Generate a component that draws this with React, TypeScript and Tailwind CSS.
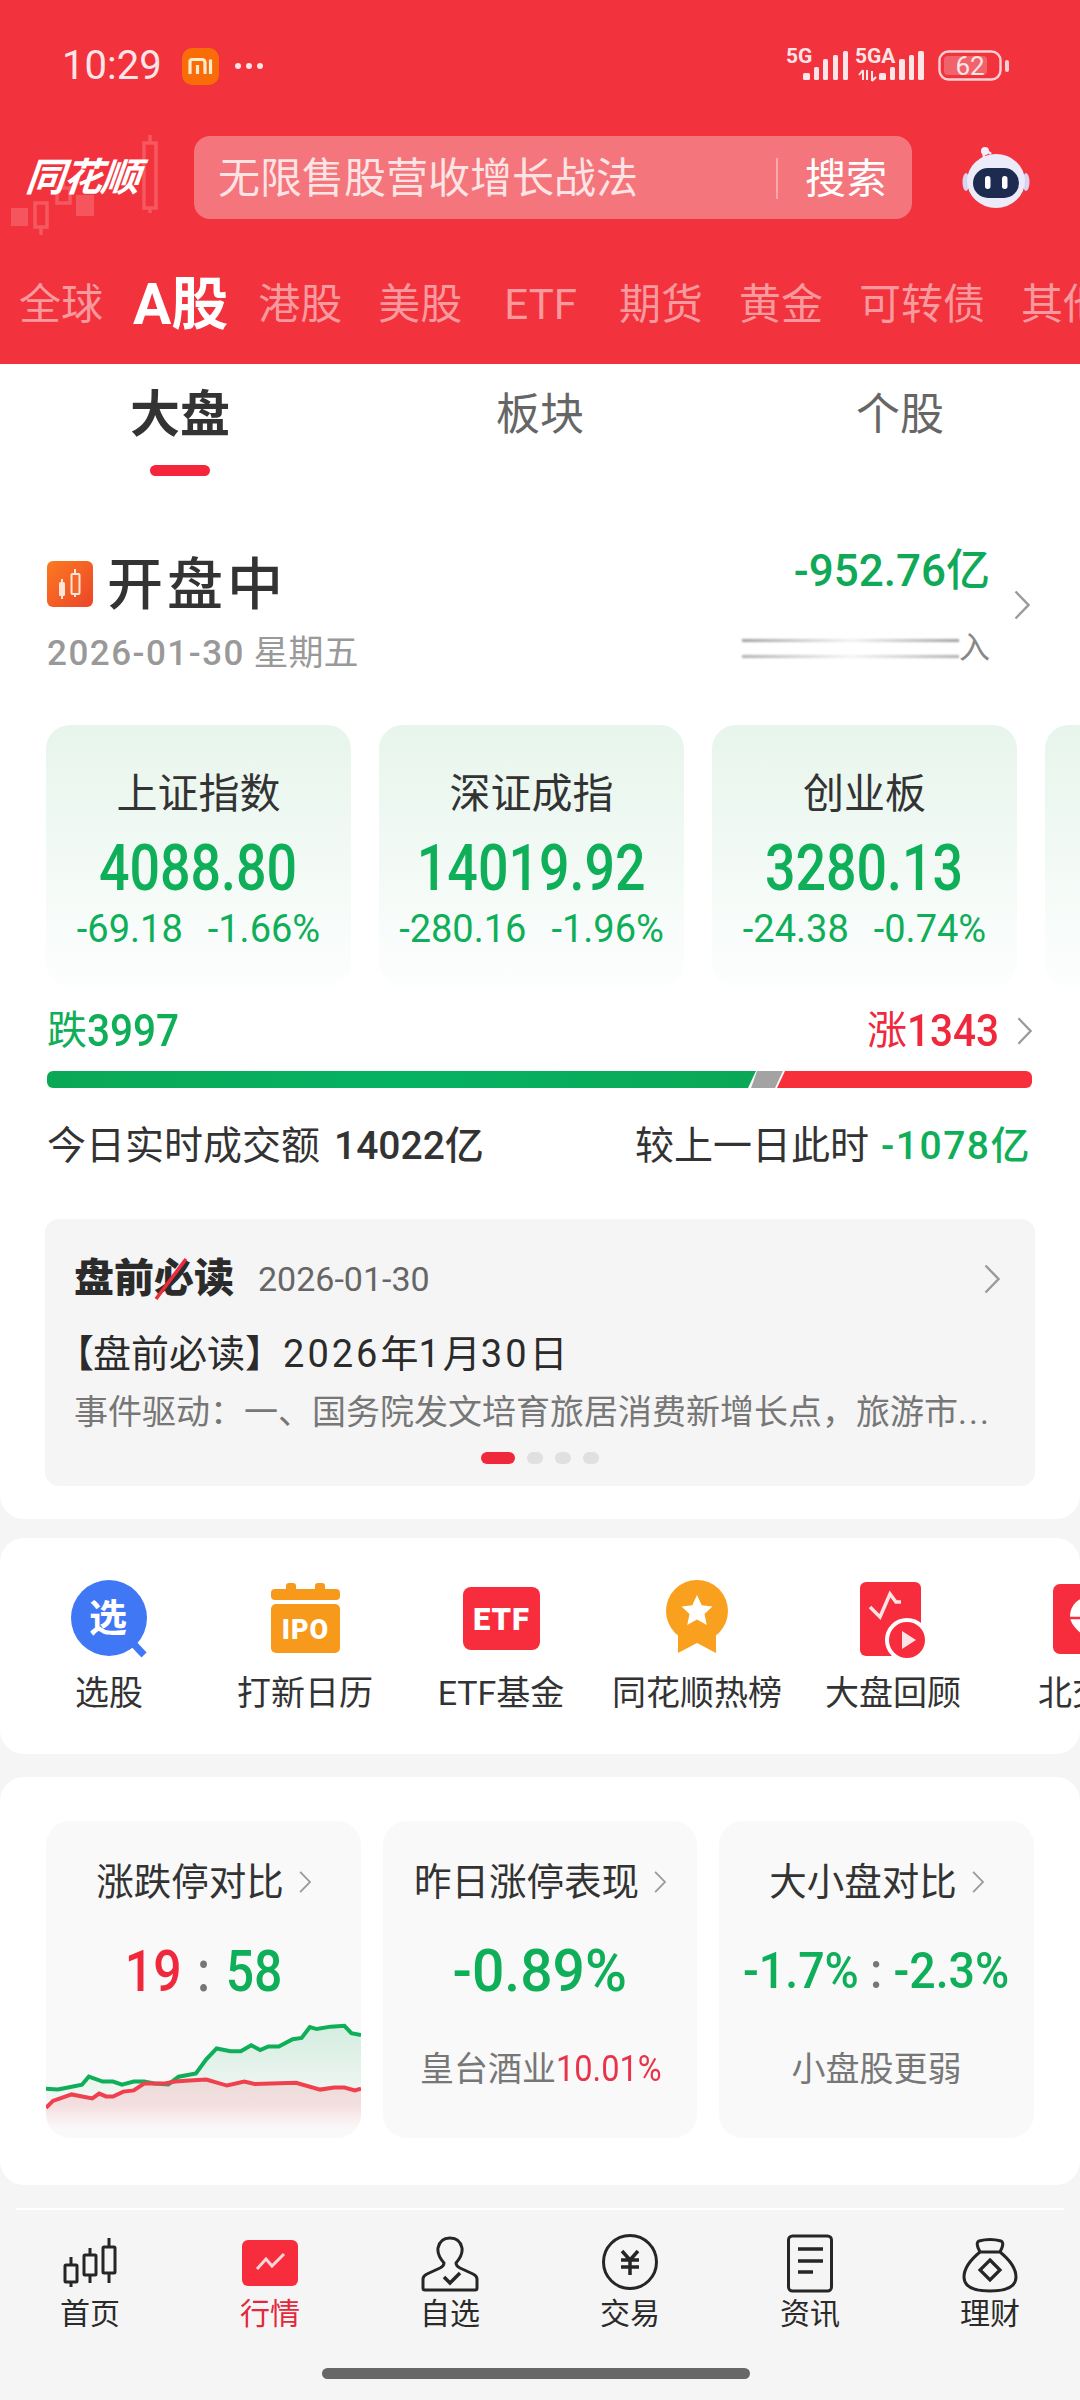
import React from "react";

function Chevron({ className = "w-[16px] h-[30px]" }: { className?: string }) {
  return (
    <svg viewBox="0 0 16 30" className={className} fill="none">
      <path d="M1.5 1.5 L14.5 15 L1.5 28.5" stroke="#9a9a9a" strokeWidth="2.4" />
    </svg>
  );
}

function StatusIcons() {
  const bars = [
    [23, 29, 7],
    [34, 23, 5],
    [43, 15, 5],
    [53, 11, 5],
    [63, 7, 5],
  ];
  const bars2 = [
    [99, 29, 7],
    [110, 23, 5],
    [119, 15, 6],
    [129, 11, 5],
    [138, 7, 6],
  ];
  return (
    <svg width="240" height="44" viewBox="0 0 240 44" className="shrink-0">
      <text x="6" y="19" fontSize="21" fontWeight="700" fill="#fde4e6" fontFamily="Roboto">5G</text>
      {bars.map(([x, y, w]) => (
        <rect key={x} x={x} y={y} width={w} height={36 - y} rx="1.5" fill="#fde4e6" />
      ))}
      <text x="75" y="19" fontSize="21" fontWeight="700" fill="#fde4e6" fontFamily="Roboto">5GA</text>
      <path d="M83 26v10M79 31l4-5M87 26v10 M92 27v10M92 37l4-4" stroke="#fde4e6" strokeWidth="2" fill="none" />
      {bars2.map(([x, y, w]) => (
        <rect key={x} x={x} y={y} width={w} height={36 - y} rx="1.5" fill="#fde4e6" />
      ))}
      <rect x="159.5" y="7.5" width="61" height="28" rx="9" fill="none" stroke="#fbd0d3" strokeWidth="2.4" />
      <rect x="164" y="12" width="43" height="19" rx="4" fill="#f1636b" />
      <text x="190" y="31" textAnchor="middle" fontSize="26" fill="#fde4e6" fontFamily="Roboto">62</text>
      <rect x="225" y="16" width="4" height="12" rx="2" fill="#fbd0d3" />
    </svg>
  );
}

function MiIcon() {
  return (
    <svg width="37" height="37" viewBox="0 0 37 37" className="shrink-0">
      <rect width="37" height="37" rx="10" fill="#f96c08" />
      <path d="M8 26V13.5a2 2 0 0 1 2-2h10a3 3 0 0 1 3 3V26M15.5 17v9" stroke="#fdeccb" strokeWidth="3.2" fill="none" />
      <path d="M28.5 11.5V26" stroke="#fdeccb" strokeWidth="3.2" />
    </svg>
  );
}

function LogoCandles() {
  return (
    <svg width="170" height="110" viewBox="0 0 170 110" className="absolute left-0 top-[-1px]" fill="none">
      <g stroke="#f5585f" strokeWidth="3.5">
        <path d="M150 0v8M150 73v5M41 92v8M63 45v8" />
        <rect x="144" y="8" width="12" height="65" />
        <rect x="35" y="68" width="12" height="24" />
        <rect x="57" y="53" width="13" height="15" />
      </g>
      <rect x="11" y="73" width="17" height="18" fill="#f5565e" />
      <rect x="76" y="60" width="18" height="21" fill="#f5565e" />
    </svg>
  );
}

function Robot() {
  return (
    <svg width="72" height="70" viewBox="0 0 72 70">
      <path d="M24 14 C22 7 27 7 31 11" stroke="#e8e4f6" strokeWidth="2.5" fill="none" />
      <circle cx="25" cy="8" r="4" fill="#f2eefa" />
      <ellipse cx="6" cy="39" rx="3.5" ry="9" fill="#d9d4f2" />
      <ellipse cx="66" cy="39" rx="3.5" ry="9" fill="#d9d4f2" />
      <ellipse cx="36" cy="38" rx="29" ry="27" fill="#ecebfa" />
      <rect x="13" y="25" width="46" height="30" rx="15" fill="#1d2b50" />
      <rect x="25" y="33" width="5.5" height="13" rx="2.7" fill="#fff" />
      <rect x="42" y="33" width="5.5" height="13" rx="2.7" fill="#fff" />
    </svg>
  );
}

function MarketCard({ name, value, d1, d2 }: { name: string; value: string; d1: string; d2: string }) {
  return (
    <div className="w-[305px] h-[262px] shrink-0 rounded-[24px] bg-gradient-to-b from-[#e7f5ec] to-[#fdfefe] flex flex-col items-center pt-[44px]">
      <div className="h-[50px] text-[41px] leading-[50px] text-[#333333]">{name}</div>
      <div className="h-[70px] mt-[15px] text-[64px] leading-[70px] font-medium scale-x-[0.84] text-[#0fae58] whitespace-nowrap">{value}</div>
      <div className="h-[40px] mt-[5px] flex gap-[25px] text-[38px] leading-[40px] text-[#0fae58]">
        <span>{d1}</span>
        <span>{d2}</span>
      </div>
    </div>
  );
}

function Shortcut({ label, children }: { label: string; children: React.ReactNode }) {
  return (
    <div className="w-[196px] shrink-0 flex flex-col items-center">
      <svg width="90" height="80" viewBox="0 0 90 80" fontFamily="Roboto, 'Noto Sans CJK SC', sans-serif">
        {children}
      </svg>
      <div className="mt-[11px] text-[34px] leading-[44px] whitespace-nowrap text-[#333333]">{label}</div>
    </div>
  );
}

function NavItem({ label, active, children }: { label: string; active?: boolean; children: React.ReactNode }) {
  return (
    <div className="flex flex-col items-center">
      <svg width="60" height="60" viewBox="0 0 60 60" fill="none" stroke="#262626" strokeWidth="3">
        {children}
      </svg>
      <div className={`mt-[3px] text-[30px] leading-[36px] ${active ? "text-[#e4283c]" : "text-[#2a2a2a]"}`}>{label}</div>
    </div>
  );
}

const greenPts = "68,808 85,810 100,805 120,798 130,778 150,790 165,790 178,798 195,790 210,790 225,795 245,797 260,778 285,770 300,735 315,708 335,715 350,715 365,700 378,712 390,703 405,703 425,685 438,682 450,655 460,660 480,654 500,652 510,670 524,675";
const redPts = "68,855 78,838 105,822 135,832 145,820 155,827 165,827 180,815 195,812 210,795 240,795 255,790 270,788 300,785 330,800 355,790 370,796 430,793 465,810 485,805 500,805 515,812 524,808";

export default function App() {
  return (
    <div className="w-[1080px] h-[2400px] overflow-hidden bg-[#f5f5f5] flex flex-col font-['Roboto','Noto_Sans_CJK_SC',sans-serif]">
      {/* Red header */}
      <header className="h-[364px] shrink-0 bg-[#f2323c] flex flex-col overflow-hidden">
        <div className="mt-[44px] h-[44px] flex items-center pl-[62px] pr-[60px]">
          <span className="text-[40px] leading-[44px] text-[#fde4e6]">10:29</span>
          <span className="ml-[20px]"><MiIcon /></span>
          <span className="ml-[16px] flex gap-[5px]">
            <i className="w-[6px] h-[6px] rounded-full bg-[#fde4e6]" />
            <i className="w-[6px] h-[6px] rounded-full bg-[#fde4e6]" />
            <i className="w-[6px] h-[6px] rounded-full bg-[#fde4e6]" />
          </span>
          <span className="ml-auto"><StatusIcons /></span>
        </div>
        <div className="mt-[48px] h-[83px] flex items-center">
          <div className="relative w-[194px] h-[83px] shrink-0">
            <LogoCandles />
            <span className="absolute left-[26px] top-[18px] text-[39px] leading-[48px] font-bold italic -skew-x-6 text-white tracking-[-1.5px] whitespace-nowrap">同花顺</span>
          </div>
          <div className="w-[718px] h-[83px] shrink-0 rounded-[16px] bg-[#f5757c] flex items-center pl-[24px] pt-[2px]">
            <span className="text-[42px] leading-[50px] text-[#fce4e5]">无限售股营收增长战法</span>
            <span className="ml-auto w-[2px] h-[41px] bg-[#f9a8ac]" />
            <span className="ml-[27px] mr-[25px] text-[41px] leading-[50px] text-white">搜索</span>
          </div>
          <div className="ml-[48px]"><Robot /></div>
        </div>
        <div className="mt-[62px] h-[48px] flex items-center pl-[19px] gap-[36px] whitespace-nowrap text-[42px] leading-[48px] text-[#f8999e]">
          <span>全球</span>
          <span className="-mx-[6px] text-[57px] font-bold text-white">A股</span>
          <span>港股</span>
          <span>美股</span>
          <span className="mx-[6px]">ETF</span>
          <span>期货</span>
          <span>黄金</span>
          <span>可转债</span>
          <span>其他</span>
        </div>
      </header>

      {/* Market overview */}
      <section className="h-[1155px] shrink-0 bg-white rounded-b-[24px] flex flex-col">
        <div className="grid grid-cols-3 h-[112px] pt-[21px]">
          <div className="flex flex-col items-center">
            <div className="text-[50px] leading-[60px] font-bold text-[#333333]">大盘</div>
            <div className="mt-[20px] w-[60px] h-[11px] rounded-full bg-[#f5263b]" />
          </div>
          <div className="text-center text-[44px] leading-[60px] text-[#666666]">板块</div>
          <div className="text-center text-[44px] leading-[60px] text-[#666666]">个股</div>
        </div>

        <div className="mt-[80px] h-[119px] pl-[47px] pr-[50px] flex">
          <div>
            <div className="flex items-center h-[56px]">
              <svg width="46" height="46" viewBox="0 0 46 46" className="shrink-0">
                <defs>
                  <linearGradient id="open-g" x1="0" y1="0" x2="1" y2="1">
                    <stop offset="0" stopColor="#fb7a22" />
                    <stop offset="1" stopColor="#ec4528" />
                  </linearGradient>
                </defs>
                <rect width="46" height="46" rx="6" fill="url(#open-g)" />
                <rect x="12" y="21" width="6" height="14" rx="1.5" fill="#fde6d8" />
                <path d="M15 18v20M28 8v28" stroke="#fde6d8" strokeWidth="2" />
                <rect x="24.5" y="13" width="8" height="20" rx="1" fill="#f4682a" stroke="#fde6d8" strokeWidth="2" />
              </svg>
              <div className="ml-[14px] pt-[2px] text-[56px] leading-[56px] font-medium tracking-[4px] text-[#333333]">开盘中</div>
            </div>
            <div className="mt-[20px] text-[35px] leading-[44px] text-[#999999] whitespace-nowrap">
              <span className="font-medium tracking-[1.5px]">2026-01-30</span>
              <span> 星期五</span>
            </div>
          </div>
          <div className="ml-auto -mt-[7px] w-[248px] flex flex-col items-end">
            <div className="h-[44px] text-[44px] leading-[44px] font-medium text-[#0fa958] whitespace-nowrap">-952.76亿</div>
            <div className="mt-[37px] w-full flex items-center">
              <div className="flex-1 flex flex-col gap-[13px]">
                <div className="h-[3px] blur-[1px] bg-gradient-to-r from-[#a0a0a0] via-[#f2f2f2] to-[#a0a0a0]" />
                <div className="h-[3px] blur-[1px] bg-gradient-to-r from-[#b0b0b0] via-[#f4f4f4] to-[#b0b0b0]" />
              </div>
              <span className="text-[31px] leading-[36px] text-[#888888]">入</span>
            </div>
          </div>
          <Chevron className="ml-[24px] mt-[34px] w-[16px] h-[30px] shrink-0" />
        </div>

        <div className="mt-[50px] pl-[46px] flex gap-[28px] overflow-hidden">
          <MarketCard name="上证指数" value="4088.80" d1="-69.18" d2="-1.66%" />
          <MarketCard name="深证成指" value="14019.92" d1="-280.16" d2="-1.96%" />
          <MarketCard name="创业板" value="3280.13" d1="-24.38" d2="-0.74%" />
          <MarketCard name="" value="" d1="" d2="" />
        </div>

        <div className="mt-[22px] h-[44px] pl-[47px] pr-[48px] flex items-center">
          <span className="text-[40px] leading-[44px] text-[#0fae58]">跌</span>
          <span className="w-[90px] origin-left scale-x-[0.9] text-[45px] leading-[44px] font-medium text-[#0fae58]">3997</span>
          <span className="ml-auto text-[40px] leading-[44px] text-[#f0283c]">涨</span>
          <span className="w-[92px] origin-left scale-x-[0.9] text-[45px] leading-[44px] font-medium text-[#f0283c]">1343</span>
          <Chevron className="ml-[18px] w-[15px] h-[30px]" />
        </div>

        <div className="mt-[18px] ml-[47px] h-[17px] flex">
          <div className="w-[709px] h-full rounded-l-[6px] bg-gradient-to-r from-[#0aa856] via-[#05b262] to-[#0aa856] [clip-path:polygon(0_0,100%_0,calc(100%_-_8px)_100%,0_100%)]" />
          <div className="-ml-[5px] w-[32px] h-full bg-[#a3a3a3] [clip-path:polygon(6px_0,100%_0,calc(100%_-_8px)_100%,0_100%)]" />
          <div className="-ml-[6px] w-[255px] h-full rounded-r-[6px] bg-[#f72f3a] [clip-path:polygon(8px_0,100%_0,100%_100%,0_100%)]" />
        </div>

        <div className="mt-[38px] h-[40px] pl-[47px] pr-[49px] flex items-center text-[39px] leading-[40px] text-[#333333] whitespace-nowrap">
          <span>今日实时成交额</span>
          <span className="ml-[14px] font-medium">14022亿</span>
          <span className="ml-auto">较上一日此时</span>
          <span className="ml-[12px] font-medium tracking-[1.5px] text-[#0fae58]">-1078亿</span>
        </div>

        <div className="mt-[53px] ml-[45px] w-[990px] h-[267px] rounded-[14px] bg-[#f5f5f5] pt-[40px] pl-[29px] pr-[35px] flex flex-col">
          <div className="h-[40px] flex items-center">
            <div className="relative text-[40px] leading-[40px] font-black text-[#2b2b2b] whitespace-nowrap">
              盘前必读
              <svg width="40" height="44" viewBox="0 0 40 44" className="absolute left-[78px] top-[-2px]">
                <path d="M4 42 L34 2" stroke="#ee2b3a" strokeWidth="3.5" />
              </svg>
            </div>
            <span className="ml-[24px] text-[34px] leading-[40px] text-[#666666]">2026-01-30</span>
            <Chevron className="ml-auto w-[16px] h-[30px]" />
          </div>
          <div className="mt-[33px] h-[44px] text-[38px] leading-[44px] text-[#2b2b2b] whitespace-nowrap">
            <span className="[font-feature-settings:'palt']">【</span>
            <span>盘前必读】</span>
            <span className="tracking-[3px]">2026</span>
            <span>年</span>
            <span className="tracking-[3px]">1</span>
            <span>月</span>
            <span className="tracking-[3px]">30</span>
            <span>日</span>
          </div>
          <div className="mt-[16px] h-[40px] text-[34px] leading-[40px] text-[#777777] whitespace-nowrap">
            事件驱动：一、国务院发文培育旅居消费新增长点，旅游市<span className="tracking-[2px]">...</span>
          </div>
          <div className="mt-[20px] pl-[6px] flex justify-center gap-[12px]">
            <i className="w-[34px] h-[12px] rounded-full bg-[#f0283c]" />
            <i className="w-[16px] h-[12px] rounded-full bg-[#e0e0e0]" />
            <i className="w-[16px] h-[12px] rounded-full bg-[#e0e0e0]" />
            <i className="w-[16px] h-[12px] rounded-full bg-[#e0e0e0]" />
          </div>
        </div>
      </section>

      {/* Shortcuts */}
      <section className="mt-[19px] h-[216px] shrink-0 bg-white rounded-[24px] pt-[42px] pl-[11px] flex overflow-hidden">
        <Shortcut label="选股">
          <circle cx="45" cy="38" r="38" fill="#3f77f5" />
          <path d="M66 60 L80 75" stroke="#3f77f5" strokeWidth="7" />
          <text x="44" y="51" textAnchor="middle" fontSize="38" fontWeight="700" fill="#fff">选</text>
        </Shortcut>
        <Shortcut label="打新日历">
          <rect x="26" y="3" width="10" height="10" rx="3" fill="#f79a1b" />
          <rect x="55" y="3" width="10" height="10" rx="3" fill="#f79a1b" />
          <rect x="11" y="9" width="69" height="11" rx="4" fill="#f79a1b" />
          <rect x="11" y="24" width="69" height="49" rx="5" fill="#f79a1b" />
          <text x="45.5" y="59" textAnchor="middle" fontSize="27" fontWeight="900" letterSpacing="1" fill="#fff">IPO</text>
        </Shortcut>
        <Shortcut label="ETF基金">
          <rect x="7" y="7" width="77" height="63" rx="8" fill="#f72d3e" />
          <text x="45.5" y="50" textAnchor="middle" fontSize="31" fontWeight="900" letterSpacing="1" fill="#fff">ETF</text>
        </Shortcut>
        <Shortcut label="同花顺热榜">
          <path d="M26 48 H64 V73 L45 63 L26 73 Z" fill="#f9a01e" />
          <circle cx="45" cy="31" r="31" fill="#f9a01e" />
          <path d="M45 15 L49.7 25.3 L60.5 26.5 L52.5 34 L54.8 45 L45 39.4 L35.2 45 L37.5 34 L29.5 26.5 L40.3 25.3 Z" fill="#fff" />
        </Shortcut>
        <Shortcut label="大盘回顾">
          <rect x="12" y="2" width="61" height="74" rx="6" fill="#f72d3e" />
          <path d="M22 27 L32 37 L42 14 L48 22 H53" stroke="#fce4e5" strokeWidth="3.5" fill="none" />
          <circle cx="59" cy="60" r="20" fill="#f72d3e" stroke="#fff" strokeWidth="4" />
          <path d="M54 51 L68 60 L54 69 Z" fill="#fce4e5" />
        </Shortcut>
        <Shortcut label="北交所">
          <rect x="9" y="4" width="72" height="70" rx="7" fill="#f72d3e" />
          <path d="M26 36 A19 19 0 0 1 64 36 C64 46 52 54 45 60 C38 54 26 46 26 36 Z" fill="#fff" />
          <path d="M26 38 H44 L48 28" stroke="#f72d3e" strokeWidth="2.5" fill="none" />
        </Shortcut>
      </section>

      {/* Comparison cards */}
      <section className="mt-[23px] h-[408px] shrink-0 bg-white rounded-[24px] pt-[44px] px-[46px] flex gap-[22px]">
        <div className="w-[315px] h-[317px] rounded-[24px] bg-[#f9f9f9] overflow-hidden flex flex-col items-center pt-[41px]">
          <div className="h-[40px] flex items-center gap-[15px] text-[37.5px] leading-[40px] text-[#333333]">
            <span>涨跌停对比</span>
            <Chevron className="w-[12px] h-[24px]" />
          </div>
          <div className="mt-[39px] h-[60px] flex items-center gap-[18px] scale-x-[0.86] text-[58px] leading-[60px] font-medium">
            <span className="text-[#f0283c]">19</span>
            <span className="text-[#777777]">:</span>
            <span className="text-[#0fae58]">58</span>
          </div>
          <svg width="315" height="117" viewBox="68 640 456 290" preserveAspectRatio="none" className="mt-[20px] shrink-0">
            <defs>
              <linearGradient id="green-a" x1="0" y1="0" x2="0" y2="1">
                <stop offset="0" stopColor="#0fae58" stopOpacity="0.16" />
                <stop offset="0.8" stopColor="#0fae58" stopOpacity="0" />
              </linearGradient>
              <linearGradient id="red-a" x1="0" y1="0" x2="0" y2="1">
                <stop offset="0.45" stopColor="#f0283c" stopOpacity="0.12" />
                <stop offset="0.85" stopColor="#f0283c" stopOpacity="0" />
              </linearGradient>
            </defs>
            <polygon points={`68,930 ${greenPts} 524,930`} fill="url(#green-a)" />
            <polygon points={`68,930 ${redPts} 524,930`} fill="url(#red-a)" />
            <polyline points={greenPts} fill="none" stroke="#0fae58" strokeWidth="4" vectorEffect="non-scaling-stroke" />
            <polyline points={redPts} fill="none" stroke="#f0404e" strokeWidth="4" vectorEffect="non-scaling-stroke" />
          </svg>
        </div>

        <div className="w-[314px] h-[317px] rounded-[24px] bg-[#f9f9f9] flex flex-col items-center pt-[41px]">
          <div className="h-[40px] flex items-center gap-[15px] text-[37.5px] leading-[40px] text-[#333333]">
            <span>昨日涨停表现</span>
            <Chevron className="w-[12px] h-[24px]" />
          </div>
          <div className="mt-[39px] h-[60px] scale-x-[0.95] text-[60px] leading-[60px] font-medium text-[#0fae58]">-0.89%</div>
          <div className="mt-[48px] h-[40px] flex items-center text-[34px] leading-[40px] text-[#777777]">
            <span>皇台酒业</span>
            <span className="w-[104px] origin-left scale-x-[0.88] text-[#e8334a] text-[37px] whitespace-nowrap">10.01%</span>
          </div>
        </div>

        <div className="w-[315px] h-[317px] rounded-[24px] bg-[#f9f9f9] flex flex-col items-center pt-[41px]">
          <div className="h-[40px] flex items-center gap-[15px] text-[37.5px] leading-[40px] text-[#333333]">
            <span>大小盘对比</span>
            <Chevron className="w-[12px] h-[24px]" />
          </div>
          <div className="mt-[39px] h-[60px] flex items-center gap-[12px] scale-x-[0.93] text-[50px] leading-[60px] font-medium text-[#0fae58] whitespace-nowrap">
            <span>-1.7%</span>
            <span className="text-[#777777]">:</span>
            <span>-2.3%</span>
          </div>
          <div className="mt-[48px] h-[40px] text-[34px] leading-[40px] text-[#777777]">小盘股更弱</div>
        </div>
      </section>

      {/* Bottom navigation */}
      <div className="mt-[23px] mx-[16px] h-[2px] shrink-0 bg-white" />
      <nav className="mt-[23px] grid grid-cols-6 shrink-0">
        <NavItem label="首页">
          <rect x="5" y="32" width="12" height="17" rx="1" />
          <path d="M11 24v8M11 49v5" />
          <rect x="24" y="22" width="12" height="20" rx="1" />
          <path d="M30 15v7M30 42v8" />
          <rect x="43" y="14" width="12" height="26" rx="1" />
          <path d="M49 5v9M49 40v10" />
        </NavItem>
        <NavItem label="行情" active>
          <rect x="2" y="7" width="56" height="46" rx="6" fill="#f72d3e" stroke="none" />
          <path d="M17 36 L26 26 L32 33 L44 21" stroke="#f9d5d8" strokeWidth="3" />
        </NavItem>
        <NavItem label="自选">
          <path d="M24 30 Q24 33 20 35 L7 41 Q3 43 3 46 V55 Q3 57 5 57 H55 Q57 57 57 55 V46 Q57 43 53 41 L40 35 Q36 33 36 30 Q43 22 42 15 Q40 5 30 5 Q20 5 18 15 Q17 22 24 30Z" />
          <path d="M24 44 L30 50 L40 40" strokeWidth="3.5" />
        </NavItem>
        <NavItem label="交易">
          <circle cx="30" cy="29" r="26.5" />
          <path d="M22 18 L30 27 L38 18 M21 27 H39 M21 34 H39 M30 27 V42" strokeWidth="3.5" />
        </NavItem>
        <NavItem label="资讯">
          <rect x="8.5" y="3" width="43" height="55" rx="4" />
          <path d="M18 16 H43 M18 28 H43 M18 39 H33" strokeWidth="3.5" />
        </NavItem>
        <NavItem label="理财">
          <path d="M20 19 Q15 10 19 8 Q30 5 41 8 Q45 10 40 19" />
          <path d="M20 19 H40 Q56 32 56 44 Q56 58 30 58 Q4 58 4 44 Q4 32 20 19Z" />
          <path d="M30 27 L40 37 L30 47 L20 37 Z" strokeWidth="3.2" />
        </NavItem>
      </nav>
      <div className="mt-[36px] ml-[322px] w-[428px] h-[11px] shrink-0 rounded-full bg-[#676767]" />
    </div>
  );
}
